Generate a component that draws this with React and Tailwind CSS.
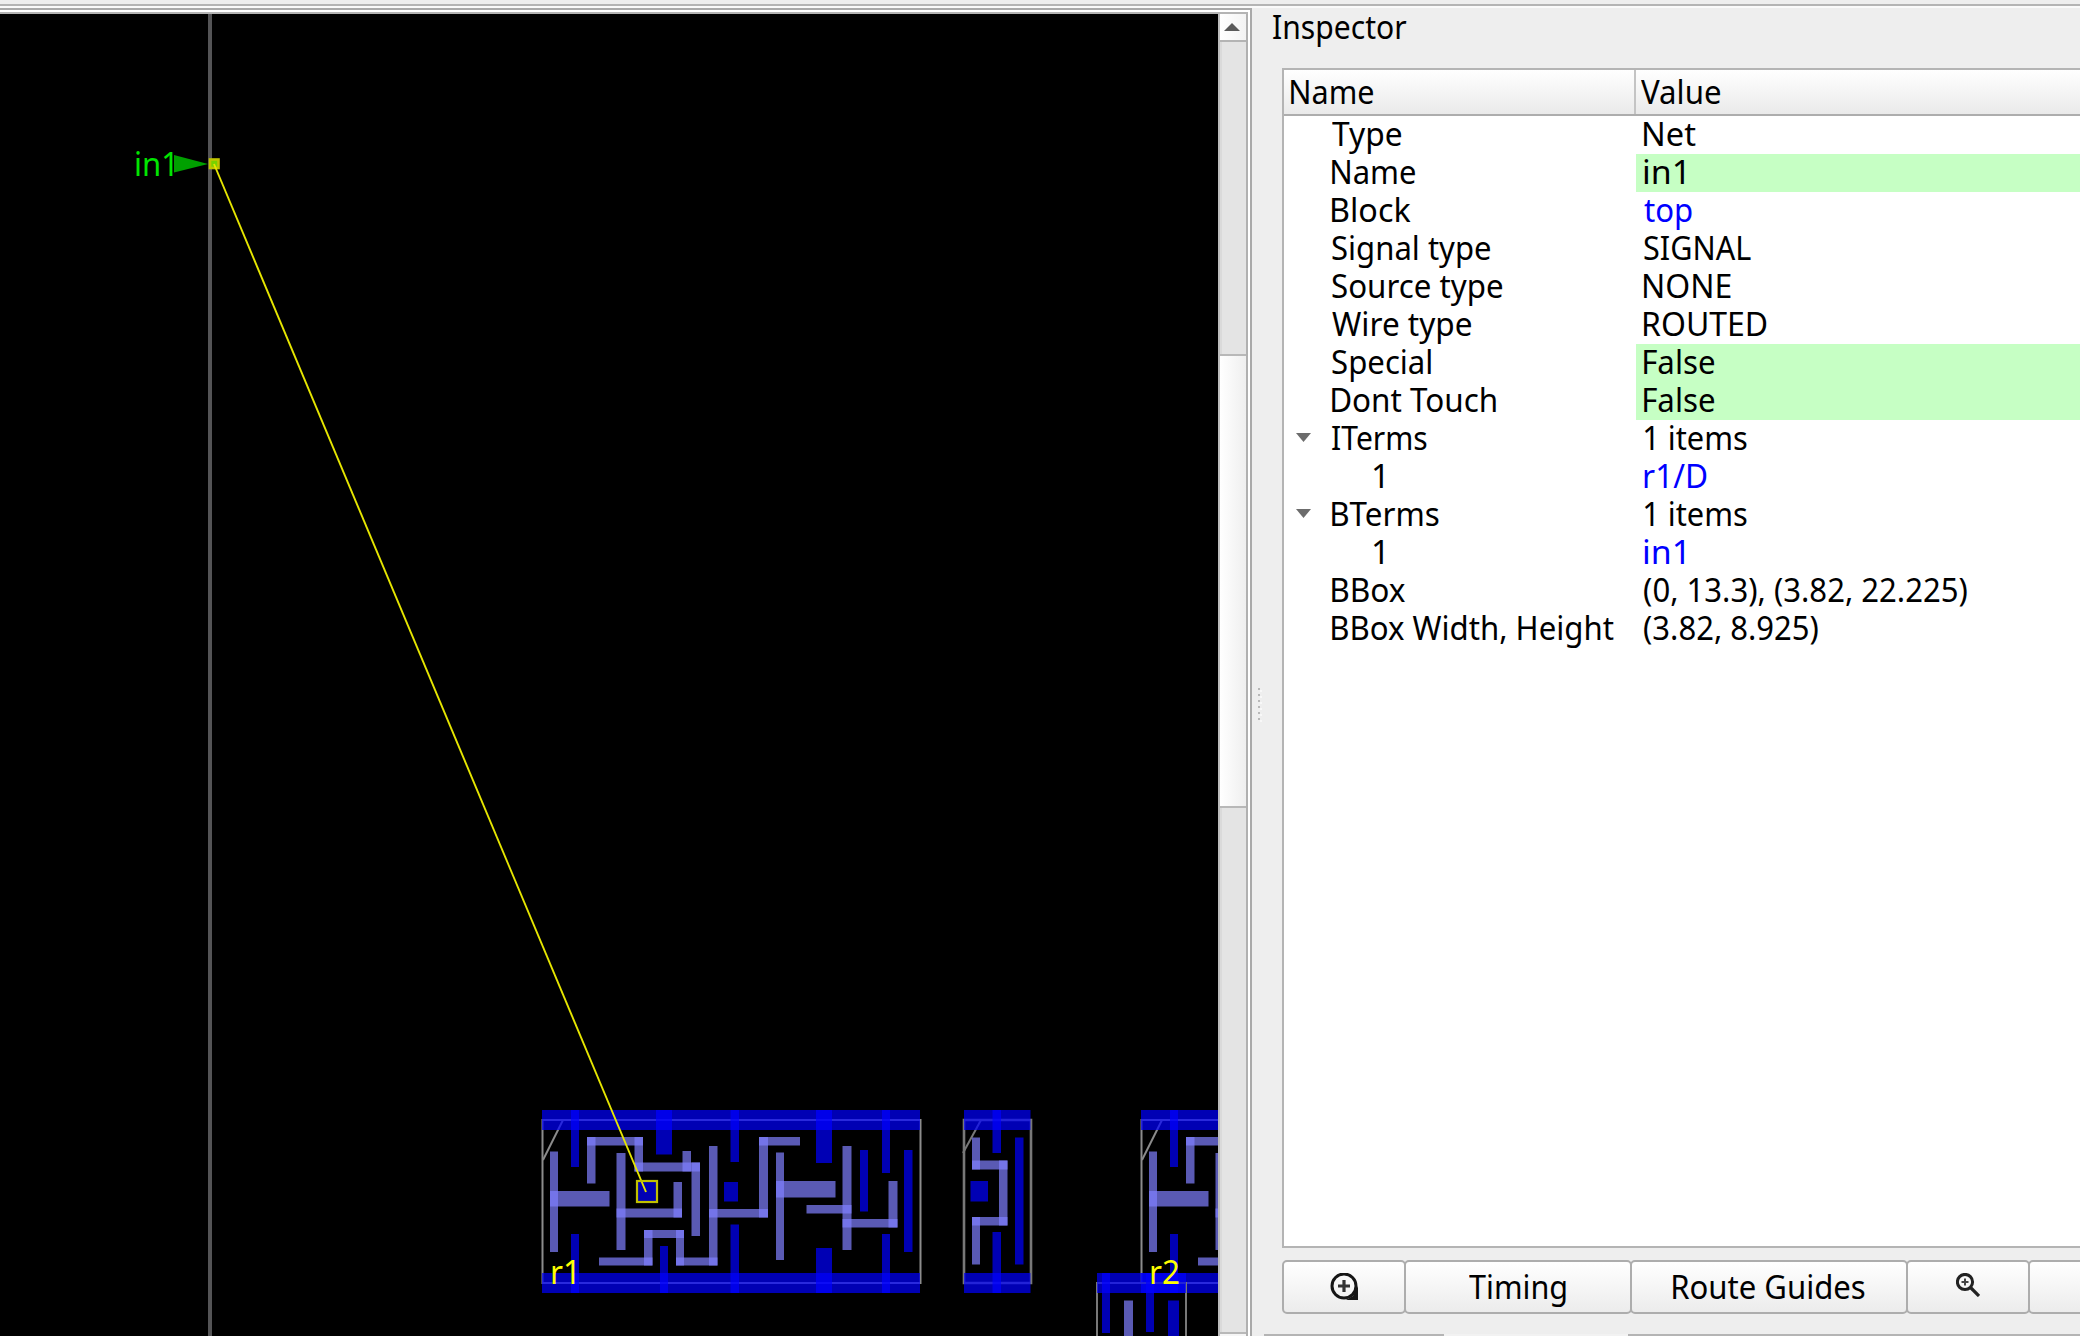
import React, { useLayoutEffect, useRef, useState } from "react";

/* Text stretched so that its drawn extent starts at the box edge and spans `w` pixels. */
function Fit({ text, w, className = "" }) {
  const ref = useRef(null);
  const [t, setT] = useState("none");
  useLayoutEffect(() => {
    const cs = getComputedStyle(ref.current);
    const ctx = document.createElement("canvas").getContext("2d");
    ctx.font = `${cs.fontWeight} ${cs.fontSize} ${cs.fontFamily}`;
    const m = ctx.measureText(text);
    const k = w / (m.actualBoundingBoxLeft + m.actualBoundingBoxRight);
    setT(`translateX(${m.actualBoundingBoxLeft * k}px) scaleX(${k})`);
  }, [text, w]);
  return (
    <span className="block shrink-0 -mt-px" style={{ width: w }}>
      <span ref={ref} className={`inline-block origin-left whitespace-pre ${className}`} style={{ transform: t }}>
        {text}
      </span>
    </span>
  );
}

const GREEN = "bg-[#c6ffc4]";
const rows = [
  { n: "Type", nw: 69, v: "Net", vw: 52 },
  { n: "Name", nw: 83, v: "in1", vw: 40, bg: true },
  { n: "Block", nw: 79, v: "top", vw: 48, link: true },
  { n: "Signal type", nw: 158, v: "SIGNAL", vw: 107 },
  { n: "Source type", nw: 170, v: "NONE", vw: 87 },
  { n: "Wire type", nw: 139, v: "ROUTED", vw: 123 },
  { n: "Special", nw: 99, v: "False", vw: 70, bg: true },
  { n: "Dont Touch", nw: 164, v: "False", vw: 70, bg: true },
  { n: "ITerms", nw: 95, v: "1 items", vw: 103, open: true },
  { n: "1", nw: 10, v: "r1/D", vw: 63, link: true, child: true },
  { n: "BTerms", nw: 107, v: "1 items", vw: 103, open: true },
  { n: "1", nw: 10, v: "in1", vw: 40, link: true, child: true },
  { n: "BBox", nw: 73, v: "(0, 13.3), (3.82, 22.225)", vw: 323 },
  { n: "BBox Width, Height", nw: 282, v: "(3.82, 8.925)", vw: 174 },
];

/* Shapes are [x1, y1, x2, y2]. */
const flopMetal = [
  [542, 1110, 920, 1130], [542, 1273, 920, 1293],
  [571, 1110, 579, 1167], [571, 1234, 579, 1293],
  [656, 1110, 672, 1154.5], [730.5, 1110, 739, 1162], [730.5, 1224.5, 739, 1293],
  [660, 1246, 668, 1293], [724, 1182, 738, 1201.5], [638, 1182, 656, 1201],
  [816, 1110, 832, 1163], [816, 1248, 832, 1293],
  [882, 1110, 890, 1173], [882, 1234, 890, 1293],
  [860, 1150, 868, 1211.5], [904, 1150, 912.5, 1252],
];
const flopPoly = [
  [550, 1151.5, 558, 1252], [550, 1191, 609.5, 1206.5],
  [587, 1137, 595.5, 1183.5], [587, 1137, 643, 1145.5], [634.5, 1137, 643, 1171.5],
  [634.5, 1162.5, 700, 1171.5], [682.5, 1151, 691, 1171.5], [691.5, 1162.5, 700, 1236],
  [616.5, 1153, 625.5, 1250], [616.5, 1208.5, 682, 1217.5], [673.5, 1182, 682, 1217.5],
  [644, 1230, 652.5, 1265.5], [644, 1230, 684, 1238], [676, 1230, 684, 1265.5],
  [599, 1257.5, 652.5, 1265.5], [676, 1257.5, 717.5, 1265.5],
  [709, 1146, 717.5, 1265.5], [709, 1209, 768, 1217.5],
  [759, 1137, 768, 1217.5], [759, 1137, 800, 1145.5],
  [776, 1152.5, 784, 1260], [776, 1181, 835.5, 1197.5],
  [842.5, 1146, 851.5, 1250], [806.5, 1205, 851.5, 1213.5],
  [842.5, 1219, 897.5, 1227.5], [888.5, 1181, 897.5, 1227.5],
];
const invMetal = [
  [964, 1110, 1030.5, 1130], [964, 1273, 1030.5, 1293],
  [992.5, 1110, 1001, 1153], [992.5, 1232, 1001, 1293],
  [1015, 1137.5, 1023.5, 1264.5], [970.5, 1181, 988, 1201.5],
];
const invPoly = [
  [972, 1137.5, 980, 1169.5], [972, 1160.5, 1007.5, 1169.5], [999, 1160.5, 1007.5, 1225.5],
  [972, 1217, 1007.5, 1225.5], [972, 1217, 980, 1264.5],
];
const lowMetal = [
  [1097, 1273, 1186, 1293], [1102, 1273, 1110, 1333], [1146, 1273, 1154, 1332], [1168, 1300.5, 1179, 1340],
];
const lowPoly = [[1124, 1300.5, 1133, 1340]];

const Shapes = ({ list, fill }) =>
  list.map(([a, b, c, d], i) => (
    <rect key={i} x={a} y={b} width={c - a} height={d - b} fill={fill} fillOpacity="0.706" />
  ));

function Flop() {
  return (
    <g>
      <g fill="none" stroke="#8c8c8c" strokeWidth="2">
        <path d="M542.5 1120V1283H920.5V1120z" />
        <path d="M543 1160L563 1120" />
      </g>
      <Shapes list={flopMetal} fill="#0000ff" />
      <Shapes list={flopPoly} fill="#8080ff" />
    </g>
  );
}

function LayoutCanvas() {
  return (
    <svg className="block h-[1322px] w-[1218px] shrink-0 bg-black" viewBox="0 14 1218 1322">
      <rect x="208" y="14" width="4" height="1322" fill="#545456" />
      <Flop />
      <g transform="translate(599 0)"><Flop /></g>
      <g fill="none" stroke="#787878" strokeWidth="2">
        <path d="M964 1120V1283H1031V1120z" strokeWidth="2.6" />
        <path d="M963 1153L981 1120" />
        <path d="M1097 1345V1283H1186V1345" />
      </g>
      <Shapes list={invMetal} fill="#0000ff" />
      <Shapes list={invPoly} fill="#8080ff" />
      <Shapes list={lowMetal} fill="#0000ff" />
      <Shapes list={lowPoly} fill="#8080ff" />
      <path d="M174 155L208 164L174 172.5z" fill="#00a000" />
      <rect x="210" y="159.5" width="8.5" height="8.5" fill="#78d200" stroke="#c0c400" strokeWidth="2.6" />
      <path d="M214 164L646 1192" stroke="#e6e600" strokeWidth="1.9" />
      <rect x="637" y="1181" width="20" height="21" fill="none" stroke="#c0c000" strokeWidth="2.2" />
      <g fontFamily='"Noto Sans", sans-serif' fontSize="33">
        <text x="134" y="175.5" fill="#00e600" textLength="45" lengthAdjust="spacingAndGlyphs">in1</text>
        <text x="550" y="1283.5" fill="#ffff00" textLength="31" lengthAdjust="spacingAndGlyphs">r1</text>
        <text x="1149" y="1283.5" fill="#ffff00" textLength="31" lengthAdjust="spacingAndGlyphs">r2</text>
      </g>
    </svg>
  );
}

function ScrollBar() {
  return (
    <div className="flex w-[30px] shrink-0 flex-col border-x-2 border-l-[#bdbdbd] border-r-[#b0b0b0]">
      <div className="flex h-[28px] items-center justify-center border-b-2 border-[#b4b4b4] bg-linear-to-r from-white to-[#f3f3f3]">
        <svg className="mr-0.5 h-2 w-4" viewBox="0 0 16 8"><path d="M8 0L16 8H0z" fill="#5a5a5a" /></svg>
      </div>
      <div className="h-[312px] border-l-2 border-[#dadada] bg-[#e4e4e4]" />
      <div className="h-[454px] border-y-2 border-[#b8b8b8] bg-linear-to-r from-white to-[#efefef]" />
      <div className="flex-1 border-l-2 border-[#dadada] bg-[#e4e4e4]" />
      <div className="h-1 border-t-2 border-[#b8b8b8] bg-[#f6f6f6]" />
    </div>
  );
}

function ToolButton({ children, className }) {
  return (
    <div className={`-mr-0.5 flex h-[54px] shrink-0 items-center justify-center rounded-[5px] border-2 border-[#adadad] bg-linear-to-b from-white to-[#ececec] ${className}`}>
      {children}
    </div>
  );
}

function Inspector() {
  return (
    <div className="flex min-w-0 flex-1 flex-col pl-[12px] text-black">
      <div className="h-[60px] pl-[9px] leading-[40px]">
        <Fit text="Inspector" w={134} />
      </div>
      <div className="ml-[18px] flex h-[1180px] flex-col border-2 border-r-0 border-[#b4b4b4] bg-white">
        <div className="flex h-[46px] shrink-0 border-b-2 border-[#adadad] bg-linear-to-b from-white to-[#eaeaea] leading-[46px]">
          <div className="w-[352px] border-r-2 border-[#c4c4c4] pl-[7px]"><Fit text="Name" w={82} /></div>
          <div className="pl-[5px]"><Fit text="Value" w={79} /></div>
        </div>
        {rows.map((r, i) => (
          <div key={i} className="flex h-[38px] shrink-0 leading-[38px]">
            <div className={`relative flex w-[352px] ${r.child ? "pl-[89px]" : "pl-[48px]"}`}>
              {r.open && (
                <svg className="absolute left-[12px] top-[13px] h-[9px] w-[15px]" viewBox="0 0 15 9">
                  <path d="M0 0H15L7.5 9z" fill="#6c6c6c" />
                </svg>
              )}
              <Fit text={r.n} w={r.nw} />
            </div>
            <div className={`flex flex-1 pl-[8px] ${r.bg ? GREEN : ""} ${r.link ? "text-[#0000ff]" : ""}`}>
              <Fit text={r.v} w={r.vw} />
            </div>
          </div>
        ))}
      </div>
      <div className="ml-[18px] mt-3 flex overflow-hidden">
        <ToolButton className="w-[124px]">
          <svg className="h-7 w-7" viewBox="0 0 28 28" fill="none">
            <circle cx="14" cy="13" r="12" stroke="#161616" strokeWidth="3" />
            <path d="M14 7V19M8 13H20" stroke="#333" strokeWidth="3.2" />
            <path d="M28 13V27H16L23 23z" fill="#161616" />
          </svg>
        </ToolButton>
        <ToolButton className="w-[228px] pr-[2px]"><Fit text="Timing" w={97} /></ToolButton>
        <ToolButton className="w-[278px]"><Fit text="Route Guides" w={192} /></ToolButton>
        <ToolButton className="w-[124px]">
          <svg className="-mt-1 h-6 w-6" viewBox="0 0 24 24" fill="none" stroke="#222">
            <circle cx="9" cy="9" r="7.6" strokeWidth="3" />
            <path d="M14.5 14.5L23 23" strokeWidth="3.2" />
            <path d="M9 5.5V12.5M5.5 9H12.5" strokeWidth="2" stroke="#444" />
          </svg>
        </ToolButton>
        <ToolButton className="w-[124px]" />
      </div>
      <div className="mt-auto flex h-0.5">
        <div className="w-[180px] bg-[#b4b4b4]" />
        <div className="w-[184px] bg-[#f2f2f2]" />
        <div className="flex-1 bg-[#b4b4b4]" />
      </div>
    </div>
  );
}

export default function App() {
  return (
    <div className="flex h-[1336px] w-[2080px] flex-col overflow-hidden bg-[#eeeeee] font-['Noto_Sans',sans-serif] text-[33px]">
      <div className="h-1 shrink-0" />
      <div className="h-1 shrink-0 border-t-2 border-[#b4b4b4] bg-[#fafafa]" />
      <div className="flex h-[1328px]">
        <div className="flex w-[1252px] shrink-0 border-r-2 border-t-2 border-[#a9a9a9]">
          <div className="flex w-[1250px] border-r-2 border-t-2 border-white">
            <div className="flex w-[1248px] border-t-2 border-[#b4b4b4]">
              <LayoutCanvas />
              <ScrollBar />
            </div>
          </div>
        </div>
        <div className="relative flex min-w-0 flex-1">
          <div className="absolute left-[6px] top-[680px] flex flex-col gap-1">
            {[0, 1, 2, 3, 4, 5].map((i) => (
              <div key={i} className="h-0.5 w-0.5 bg-[#b8b8b8] shadow-[2px_2px_0_#f8f8f8]" />
            ))}
          </div>
          <Inspector />
        </div>
      </div>
    </div>
  );
}
